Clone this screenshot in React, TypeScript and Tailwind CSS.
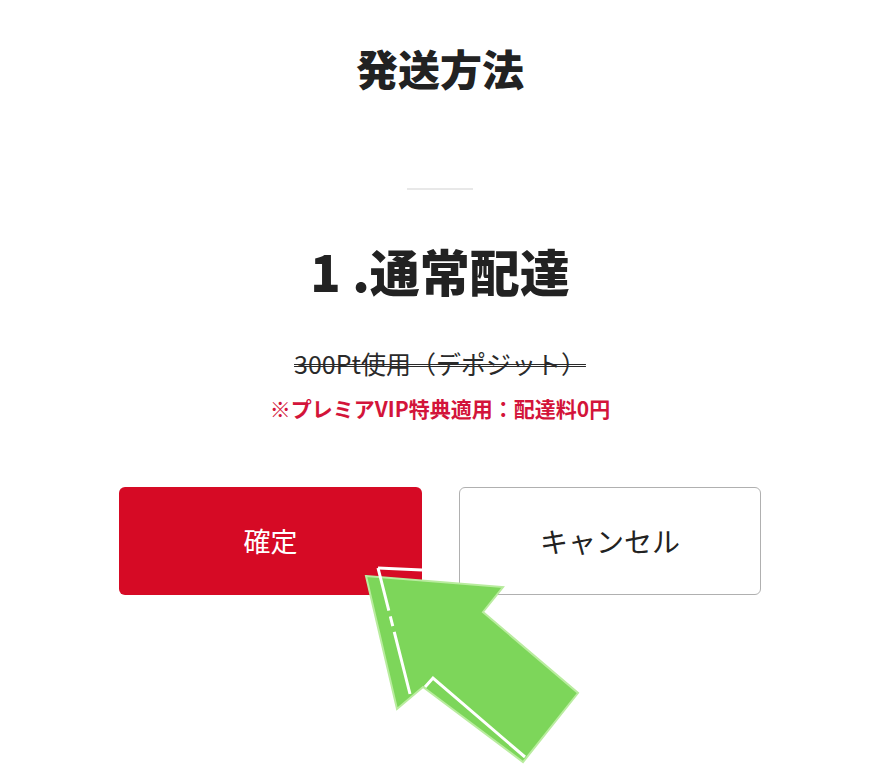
import React from 'react';

const jp = { fontFamily: '"Noto Sans CJK JP", "Noto Sans", sans-serif' };

// Green pointer drawn over the buttons
function PointerArrow() {
  return (
    <svg
      className="pointer-events-none absolute left-0 top-0"
      width={880}
      height={778}
      viewBox="0 0 880 778"
    >
      <polygon
        points="366,576 503,587 483,612 578,693 523,762 423,687 397,709"
        fill="#7dd65a"
        stroke="#b9ec9f"
        strokeWidth={2}
        strokeLinejoin="miter"
      />
      <polyline points="422,570 378,568" fill="none" stroke="#ffffff" strokeWidth={3} />
      <line
        x1={378}
        y1={568}
        x2={410}
        y2={694}
        stroke="#ffffff"
        strokeWidth={3}
        strokeDasharray="44 6 10 6 70"
      />
      <polyline points="425,687 433,678 525,757" fill="none" stroke="#ffffff" strokeWidth={3} />
    </svg>
  );
}

export default function App() {
  return (
    <div className="relative h-[778px] w-[880px] overflow-hidden bg-white" style={jp}>
      <div className="flex flex-col items-center pt-[44px]">
        <h1 className="h-[48px] text-[42px] font-black leading-[48px] text-[#222222]">発送方法</h1>

        <div className="mt-[96px] h-[2px] w-[66px] bg-[#e8e8e8]" />

        <h2 className="mt-[51px] h-[58px] text-[50px] font-black leading-[58px] text-[#222222]">
          1 .通常配達
        </h2>

        <p className="mt-[48px] h-[32px] text-[25px] leading-[32px] text-[#2a2a2a] line-through decoration-double decoration-1">
          300Pt使用（デポジット）
        </p>

        <p className="mt-[15px] h-[28px] text-[21px] font-bold leading-[28px] text-[#d3143a]">
          ※プレミアVIP特典適用：配達料0円
        </p>

        <div className="mt-[65px] flex gap-[37px]">
          <button className="flex h-[108px] w-[303px] items-center justify-center rounded-[6px] bg-[#d60a25] text-[27px] text-white">
            確定
          </button>
          <button className="flex h-[108px] w-[302px] items-center justify-center rounded-[6px] border-[1.5px] border-[#b0b0b0] bg-white text-[28px] text-[#222222]">
            キャンセル
          </button>
        </div>
      </div>

      <PointerArrow />
    </div>
  );
}
